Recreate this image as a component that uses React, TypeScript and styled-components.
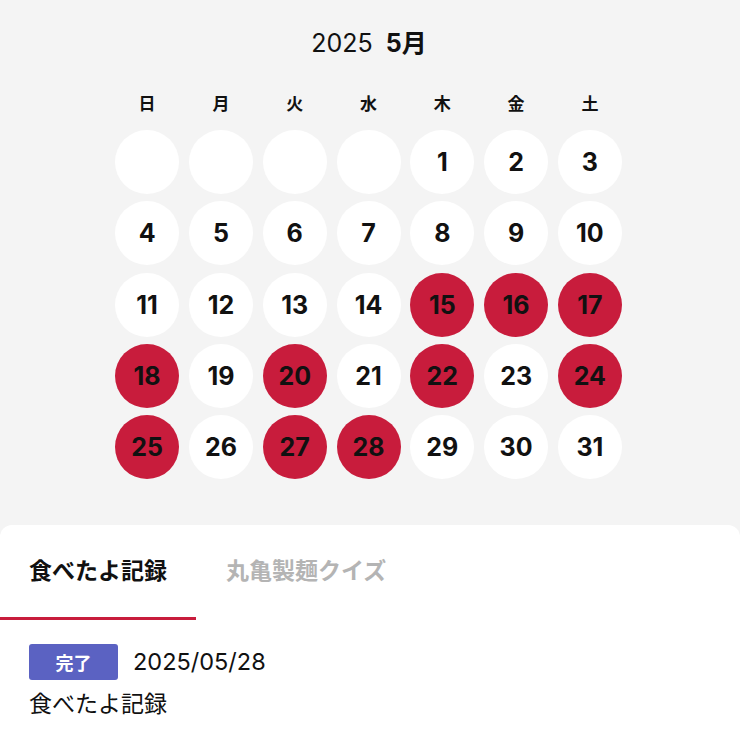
import React, { FC } from "react";
import styled, { createGlobalStyle } from "styled-components";

const GlobalStyle = createGlobalStyle`
  html, body {
    margin: 0;
    padding: 0;
    background: #f4f4f4;
  }
  body {
    font-family: "Inter", "Noto Sans CJK JP", sans-serif;
    color: #111111;
  }
`;

const weekdays = ["日", "月", "火", "水", "木", "金", "土"];
const eaten = [15, 16, 17, 18, 20, 22, 24, 25, 27, 28];
const firstOffset = 4;
const daysInMonth = 31;

const cells: (number | null)[] = [
  ...Array.from({ length: firstOffset }, () => null),
  ...Array.from({ length: daysInMonth }, (_, i) => i + 1),
];

const Calendar: FC = () => (
  <CalendarRoot>
    <MonthTitle>
      <Year>2025</Year>
      <Month>5月</Month>
    </MonthTitle>
    <Grid>
      {weekdays.map(w => (
        <Weekday key={w}>{w}</Weekday>
      ))}
      {cells.map((d, i) => (
        <Day key={i} $eaten={d !== null && eaten.includes(d)}>
          {d}
        </Day>
      ))}
    </Grid>
  </CalendarRoot>
);

const Records: FC = () => (
  <Card>
    <Tabs>
      <Tab $active>食べたよ記録</Tab>
      <Tab>丸亀製麺クイズ</Tab>
    </Tabs>
    <RecordList>
      <RecordHead>
        <Badge>完了</Badge>
        <RecordDate>2025/05/28</RecordDate>
      </RecordHead>
      <RecordTitle>食べたよ記録</RecordTitle>
    </RecordList>
  </Card>
);

export default function App() {
  return (
    <Page>
      <GlobalStyle />
      <Calendar />
      <Records />
    </Page>
  );
}

const Page = styled.div`
  width: 740px;
  min-height: 740px;
  display: flex;
  flex-direction: column;
  background: #f4f4f4;
`;

const CalendarRoot = styled.div`
  display: flex;
  flex-direction: column;
  align-items: center;
  padding: 23px 0 46px;
`;

const MonthTitle = styled.div`
  display: flex;
  align-items: baseline;
  gap: 13px;
  height: 34px;
  margin-left: -2px;
`;

const Year = styled.span`
  font-size: 25px;
  font-weight: 400;
`;

const Month = styled.span`
  font-size: 25px;
  font-weight: 700;
`;

const Grid = styled.div`
  display: grid;
  grid-template-columns: repeat(7, 64px);
  column-gap: 9.8px;
  row-gap: 7.2px;
  margin-top: 33px;
  margin-left: -3px;
`;

const Weekday = styled.div`
  height: 24px;
  margin-bottom: 9px;
  display: flex;
  align-items: center;
  justify-content: center;
  font-size: 17px;
  font-weight: 700;
`;

const Day = styled.div<{ $eaten?: boolean }>`
  width: 64px;
  height: 64px;
  border-radius: 50%;
  display: flex;
  align-items: center;
  justify-content: center;
  background: ${p => (p.$eaten ? "#c81c3c" : "#ffffff")};
  color: #111111;
  font-size: 25px;
  font-weight: 700;
`;

const Card = styled.div`
  flex: 1;
  background: #ffffff;
  border-radius: 12px 12px 0 0;
`;

const Tabs = styled.div`
  display: flex;
  padding-top: 26px;
`;

const Tab = styled.div<{ $active?: boolean }>`
  padding: 0 29px 26px;
  font-size: 23px;
  font-weight: 700;
  line-height: 40px;
  color: ${p => (p.$active ? "#111111" : "#b4b4b4")};
  border-bottom: 3px solid ${p => (p.$active ? "#c81c3c" : "transparent")};
  margin-right: ${p => (p.$active ? "1px" : "0")};
`;

const RecordList = styled.div`
  padding: 24px 29px 0;
  display: flex;
  flex-direction: column;
  gap: 8px;
`;

const RecordHead = styled.div`
  display: flex;
  align-items: center;
  gap: 15px;
`;

const Badge = styled.span`
  width: 89px;
  height: 36px;
  border-radius: 3px;
  background: #5b62c2;
  color: #ffffff;
  font-size: 18px;
  font-weight: 700;
  display: flex;
  align-items: center;
  justify-content: center;
`;

const RecordDate = styled.span`
  font-size: 23.5px;
  font-weight: 400;
`;

const RecordTitle = styled.div`
  font-size: 23px;
  line-height: 32px;
`;
